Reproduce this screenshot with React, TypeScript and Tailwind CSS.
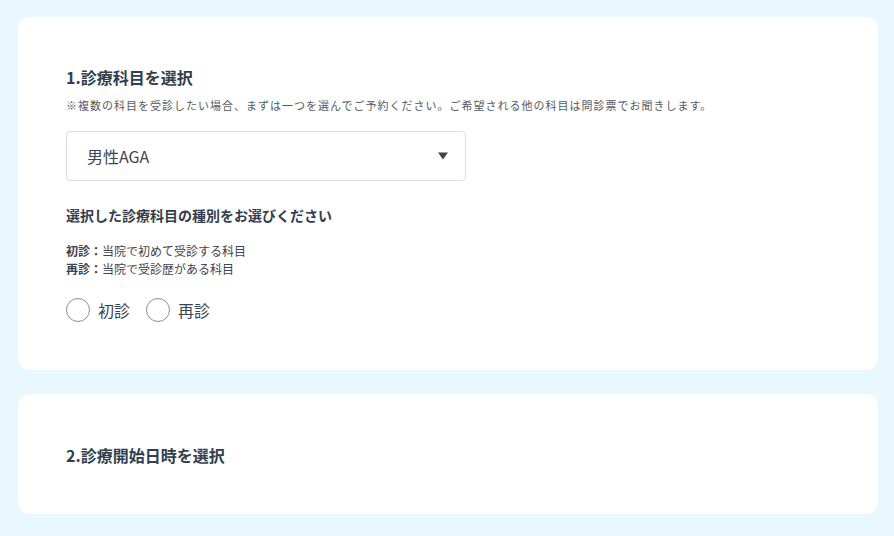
const font = { fontFamily: '"Noto Sans CJK JP", "Noto Sans", sans-serif' }

function Radio({ label }: { label: string }) {
  return (
    <label className="flex items-center gap-2">
      <span className="w-6 h-6 rounded-full border border-[#8a8d99] bg-white" />
      <span className="text-base leading-6 text-[#3d4450]">{label}</span>
    </label>
  )
}

export default function App() {
  return (
    <div className="min-h-[536px] bg-[#e9f7fe] pl-[18px] pr-4 pt-[17px] pb-[22px] text-[#333e4d]" style={font}>
      {/* 1. 診療科目 */}
      <section className="bg-white rounded-xl px-12 pt-12 pb-12">
        <h2 className="text-base leading-6 font-bold text-[#333e4d]">1.診療科目を選択</h2>
        <p className="mt-2 text-[11px] leading-4 tracking-[1px] text-[#555a63]">
          ※複数の科目を受診したい場合、まずは一つを選んでご予約ください。ご希望される他の科目は問診票でお聞きします。
        </p>
        <div className="mt-[18px] w-[400px] h-[50px] border border-[#dcdce4] rounded flex items-center justify-between pl-5 pr-[17px]">
          <span className="text-base text-[#3d4450]">男性AGA</span>
          <svg width="10" height="8" viewBox="0 0 10 8">
            <path d="M0 0.5 H10 L5 7.5 Z" fill="#3a4452" />
          </svg>
        </div>
        <h3 className="mt-6 text-sm leading-5 font-bold text-[#333e4d]">選択した診療科目の種別をお選びください</h3>
        <div className="mt-[17px] text-xs leading-[18px] text-[#3d4450]">
          <p><span className="font-bold">初診：</span>当院で初めて受診する科目</p>
          <p><span className="font-bold">再診：</span>当院で受診歴がある科目</p>
        </div>
        <div className="mt-5 flex items-center gap-4">
          <Radio label="初診" />
          <Radio label="再診" />
        </div>
      </section>

      {/* 2. 診療開始日時 */}
      <section className="mt-6 bg-white rounded-xl px-12 pt-[49px] pb-[47px]">
        <h2 className="text-base leading-6 font-bold text-[#333e4d]">2.診療開始日時を選択</h2>
      </section>
    </div>
  )
}
